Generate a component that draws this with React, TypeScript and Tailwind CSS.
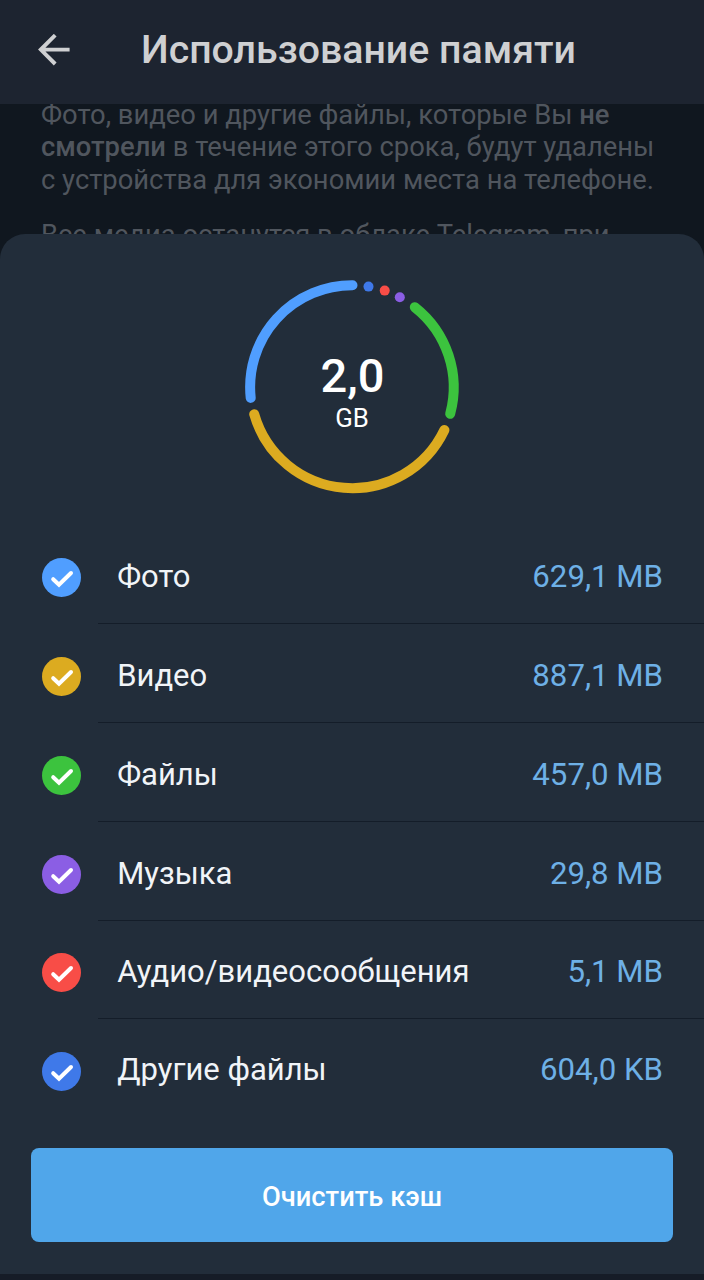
import { useState } from "react";

interface CategoryType {
  id: number;
  name: string;
  size: string;
  color: string;
}

interface RowProps {
  category: CategoryType;
  checked: boolean;
  last: boolean;
  toggle: (id: number) => void;
}

const categories: CategoryType[] = [
  { id: 0, name: "Фото", size: "629,1 MB", color: "text-[#509eff]" },
  { id: 1, name: "Видео", size: "887,1 MB", color: "text-[#dcab20]" },
  { id: 2, name: "Файлы", size: "457,0 MB", color: "text-[#3cc33e]" },
  { id: 3, name: "Музыка", size: "29,8 MB", color: "text-[#8b5ee4]" },
  { id: 4, name: "Аудио/видеосообщения", size: "5,1 MB", color: "text-[#f84d47]" },
  { id: 5, name: "Другие файлы", size: "604,0 KB", color: "text-[#3f79e9]" },
];

const Header = () => (
  <header className="flex h-[104px] shrink-0 items-center bg-[#1d2430] pl-[38px] text-[#cfd0d2]">
    <button aria-label="Назад" className="mt-[-5px] h-8 w-8">
      <svg viewBox="0 0 32 32" fill="none" stroke="currentColor" strokeWidth="3.9">
        <path d="M31.6 15.6H3M17.2 1.2 2.8 15.6l14.4 14.4" />
      </svg>
    </button>
    <h1 className="mt-[-4px] ml-[71px] text-[39.25px] font-medium whitespace-nowrap">
      Использование памяти
    </h1>
  </header>
);

const Description = () => (
  <section className="h-[129.6px] shrink-0 overflow-hidden pl-[41px] text-[27.37px] leading-[32.3px] whitespace-nowrap text-[#50565e]">
    <p className="mt-[-5px]">
      Фото, видео и другие файлы, которые Вы <b className="font-medium">не</b>
      <br />
      <b className="font-medium">смотрели</b> в течение этого срока, будут удалены
      <br />с устройства для экономии места на телефоне.
    </p>
    <p className="mt-[23.4px]">Все медиа останутся в облаке Telegram, при</p>
  </section>
);

const Chart = () => (
  <div className="mx-auto mt-[31.4px] grid h-[240px] w-[240px] shrink-0 place-items-center">
    <svg
      viewBox="0 0 240 240"
      fill="none"
      strokeWidth="10"
      strokeLinecap="round"
      className="col-start-1 row-start-1 h-full w-full"
    >
      <path stroke="#509eff" d="M18.7 132.9A102 102 0 0 1 120.5 20.2" />
      <path stroke="#dcab20" d="M212.4 165A102 102 0 0 1 22.2 149.2" />
      <path stroke="#3cc33e" d="M182.8 42.2A102 102 0 0 1 218.2 148.8" />
      <circle cx="136.5" cy="21.6" r="5" fill="#3f79e9" />
      <circle cx="152.7" cy="25.6" r="5" fill="#f84d47" />
      <circle cx="167.8" cy="32.2" r="5" fill="#8b5ee4" />
    </svg>
    <div className="col-start-1 row-start-1 mt-[18px] flex flex-col items-center text-white">
      <span className="pl-px text-[47px] leading-[48px] font-medium">2,0</span>
      <span className="text-[25.8px] leading-[36px]">GB</span>
    </div>
  </div>
);

const Row = ({ category, checked, last, toggle }: RowProps) => (
  <button
    onClick={() => toggle(category.id)}
    className="flex h-[98.75px] w-full items-center pl-[42px] text-left"
  >
    <svg viewBox="0 0 39 39" className={`mt-[6px] h-[39px] w-[39px] shrink-0 ${category.color}`}>
      <circle cx="19.5" cy="19.5" r="19.5" fill="currentColor" />
      {checked && (
        <path
          d="m11.2 21.2 5.8 5.6L29 15"
          fill="none"
          stroke="#fff"
          strokeWidth="4"
          strokeLinecap="round"
        />
      )}
    </svg>
    <span
      className={`ml-[17px] flex h-full grow items-center justify-between border-b pr-[41px] pl-[19.2px] ${
        last ? "border-transparent pt-[4.4px]" : "border-[#141d29] pt-[5.6px]"
      }`}
    >
      <span className="text-[31px] leading-[46px] text-[#f1f4f8]">{category.name}</span>
      <span className="text-[31.2px] leading-[46px] text-[#6eb0e6]">{category.size}</span>
    </span>
  </button>
);

const App = () => {
  const [unchecked, setUnchecked] = useState<number[]>([]);

  const toggle = (id: number) => {
    if (unchecked.includes(id)) {
      setUnchecked(unchecked.filter((u) => u !== id));
    } else {
      setUnchecked([...unchecked, id]);
    }
  };

  return (
    <div className="flex h-[1280px] w-[704px] flex-col overflow-hidden bg-[#10171f] font-[Roboto,sans-serif]">
      <Header />
      <Description />
      <main className="flex h-[1040px] shrink-0 flex-col rounded-t-[25px] bg-[#222d3a]">
        <Chart />
        <div className="mt-[20.6px]">
          {categories.map((c, i) => (
            <Row
              key={c.id}
              category={c}
              checked={!unchecked.includes(c.id)}
              last={i === categories.length - 1}
              toggle={toggle}
            />
          ))}
        </div>
        <button className="mx-[31px] mt-[30px] h-[94px] rounded-[8px] bg-[#50a6ea] pt-[5px] text-[27.3px] font-medium text-white">
          Очистить кэш
        </button>
      </main>
      <div className="grow bg-[#161c27]" />
    </div>
  );
};

export default App;
